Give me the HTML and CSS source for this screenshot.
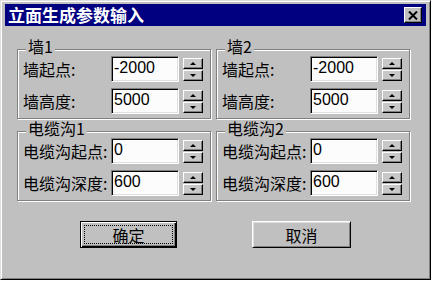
FILE: index.html
```html
<!DOCTYPE html>
<html lang="zh-CN">
<head>
  <meta charset="UTF-8" />
  <title>立面生成参数输入</title>
  <link rel="stylesheet" href="styles.css">
</head>
<body>
  <div class="dialog">
    <div class="titlebar">
      <span class="title">立面生成参数输入</span>
      <button type="button" class="close-btn" aria-label="关闭">
        <svg width="10" height="9" viewBox="0 0 10 9"><path d="M1 0.5 L9 8.5 M9 0.5 L1 8.5" stroke="#000" stroke-width="2" fill="none"/></svg>
      </button>
    </div>

    <div class="groups">
      <div class="group">
        <span class="group-title">墙1</span>
        <div class="row">
          <label>墙起点:</label>
          <input type="text" value="-2000" />
          <span class="spin"><button type="button" class="spin-btn up"></button><button type="button" class="spin-btn down"></button></span>
        </div>
        <div class="row">
          <label>墙高度:</label>
          <input type="text" value="5000" />
          <span class="spin"><button type="button" class="spin-btn up"></button><button type="button" class="spin-btn down"></button></span>
        </div>
      </div>

      <div class="group">
        <span class="group-title">墙2</span>
        <div class="row">
          <label>墙起点:</label>
          <input type="text" value="-2000" />
          <span class="spin"><button type="button" class="spin-btn up"></button><button type="button" class="spin-btn down"></button></span>
        </div>
        <div class="row">
          <label>墙高度:</label>
          <input type="text" value="5000" />
          <span class="spin"><button type="button" class="spin-btn up"></button><button type="button" class="spin-btn down"></button></span>
        </div>
      </div>

      <div class="group">
        <span class="group-title">电缆沟1</span>
        <div class="row">
          <label>电缆沟起点:</label>
          <input type="text" value="0" />
          <span class="spin"><button type="button" class="spin-btn up"></button><button type="button" class="spin-btn down"></button></span>
        </div>
        <div class="row">
          <label>电缆沟深度:</label>
          <input type="text" value="600" />
          <span class="spin"><button type="button" class="spin-btn up"></button><button type="button" class="spin-btn down"></button></span>
        </div>
      </div>

      <div class="group">
        <span class="group-title">电缆沟2</span>
        <div class="row">
          <label>电缆沟起点:</label>
          <input type="text" value="0" />
          <span class="spin"><button type="button" class="spin-btn up"></button><button type="button" class="spin-btn down"></button></span>
        </div>
        <div class="row">
          <label>电缆沟深度:</label>
          <input type="text" value="600" />
          <span class="spin"><button type="button" class="spin-btn up"></button><button type="button" class="spin-btn down"></button></span>
        </div>
      </div>
    </div>

    <div class="actions">
      <button type="button" class="btn btn-default">确定</button>
      <button type="button" class="btn">取消</button>
    </div>
  </div>
</body>
</html>
```

FILE: styles.css
```css
body {
  margin: 0;
  background: #fff;
  font-family: "Noto Sans CJK SC", sans-serif;
  color: #000;
}
.dialog {
  width: 431px;
  height: 280px;
  box-sizing: border-box;
  background: #c0c0c0;
  border: 1px solid;
  border-color: #dfdfdf #000 #000 #dfdfdf;
  box-shadow: inset 1px 1px #fff, inset -1px -1px #808080;
  padding: 3px 4px;
}
.titlebar {
  height: 22px;
  background: #000080;
  display: flex;
  align-items: center;
  justify-content: space-between;
  padding: 0 4px 0 3px;
}
.title {
  color: #fff;
  font-weight: bold;
  font-size: 17px;
  line-height: 22px;
}
.close-btn {
  width: 18px;
  height: 16px;
  padding: 0;
  background: #c0c0c0;
  border: 1px solid;
  border-color: #fff #000 #000 #fff;
  box-shadow: inset -1px -1px #808080;
  display: flex;
  align-items: center;
  justify-content: center;
}
.groups {
  display: grid;
  grid-template-columns: 194px 194px;
  column-gap: 5px;
  row-gap: 12px;
  margin: 23px 0 0 12px;
}
.group {
  display: flex;
  flex-direction: column;
  border: 1px solid #808080;
  box-shadow: inset 1px 1px #fff, 1px 1px #fff;
  padding: 0 7px 4px 5px;
}
.group-title {
  align-self: flex-start;
  margin: -12px 0 2px 3px;
  padding: 0 2px;
  background: #c0c0c0;
  font-size: 16px;
  line-height: 16px;
}
.row {
  display: flex;
  align-items: center;
  height: 26px;
}
.row + .row {
  margin-top: 6px;
}
.row label {
  flex: none;
  width: 88px;
  font-size: 16px;
  line-height: 20px;
}
.row input {
  flex: none;
  width: 68px;
  height: 26px;
  box-sizing: border-box;
  margin: 0;
  padding: 0 2px 3px 2px;
  font-family: "Liberation Sans", Arial, sans-serif;
  font-size: 16px;
  color: #000;
  background: #fcfcfc;
  border: 1px solid;
  border-color: #808080 #fff #fff #808080;
  box-shadow: inset 1px 1px #000, inset -1px -1px #dfdfdf;
  outline: none;
}
.spin {
  flex: none;
  display: flex;
  flex-direction: column;
  gap: 1px;
  width: 20px;
  margin-left: 4px;
}
.spin-btn {
  height: 11px;
  padding: 0;
  background: #c8c8c8;
  border: 1px solid;
  border-color: #fff #000 #000 #fff;
  box-shadow: inset -1px -1px #808080;
  display: flex;
  align-items: center;
  justify-content: center;
}
.spin-btn::before {
  content: "";
  width: 0;
  height: 0;
  border-left: 3px solid transparent;
  border-right: 3px solid transparent;
}
.spin-btn.up::before {
  border-bottom: 3px solid #000;
}
.spin-btn.down::before {
  border-top: 3px solid #000;
}
.actions {
  display: flex;
  gap: 75px;
  margin-top: 20px;
  padding-left: 75px;
}
.btn {
  width: 99px;
  height: 27px;
  padding: 0;
  font-family: "Noto Sans CJK SC", sans-serif;
  font-size: 16px;
  line-height: 20px;
  color: #000;
  background: #c0c0c0;
  border: 1px solid;
  border-color: #fff #000 #000 #fff;
  box-shadow: inset 1px 1px #dfdfdf, inset -1px -1px #808080;
}
.btn-default {
  width: 97px;
  border-color: #000;
  box-shadow: inset 1px 1px #fff, inset -1px -1px #000, inset -2px -2px #808080;
  outline: 1px dotted #000;
  outline-offset: -5px;
}
```
